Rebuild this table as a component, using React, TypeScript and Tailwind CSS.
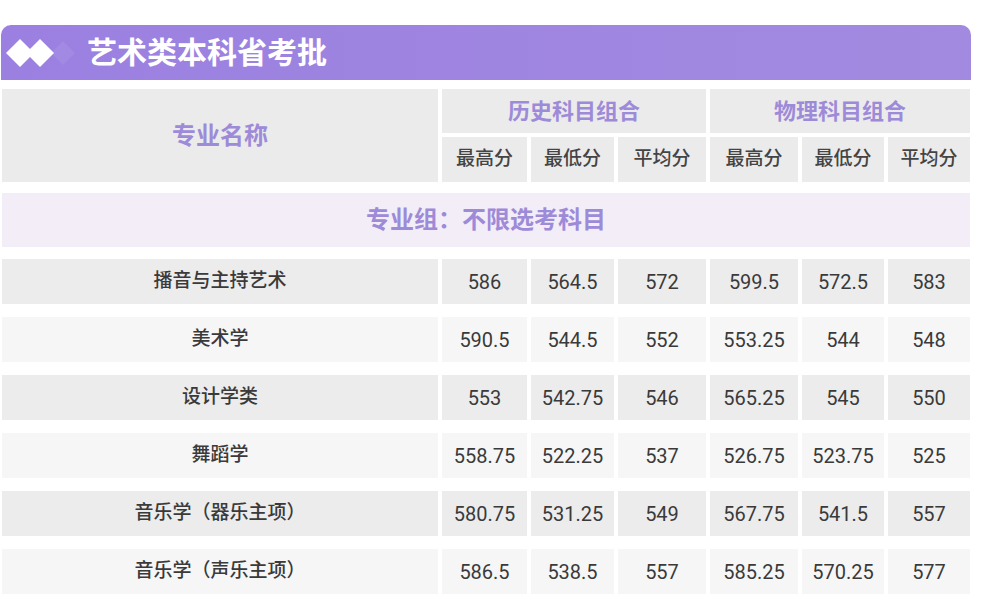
import React from "react"

const rows = [
  { name: "播音与主持艺术", v: ["586", "564.5", "572", "599.5", "572.5", "583"] },
  { name: "美术学", v: ["590.5", "544.5", "552", "553.25", "544", "548"] },
  { name: "设计学类", v: ["553", "542.75", "546", "565.25", "545", "550"] },
  { name: "舞蹈学", v: ["558.75", "522.25", "537", "526.75", "523.75", "525"] },
  { name: "音乐学（器乐主项）", v: ["580.75", "531.25", "549", "567.75", "541.5", "557"] },
  { name: "音乐学（声乐主项）", v: ["586.5", "538.5", "557", "585.25", "570.25", "577"] },
]

const subHeads = ["最高分", "最低分", "平均分", "最高分", "最低分", "平均分"]

const cols = "grid grid-cols-[436px_85px_83px_88px_88px_82px_82px] gap-x-[4px]"

function Diamonds() {
  return (
    <svg width="84" height="34" viewBox="0 0 84 34" className="shrink-0">
      <path d="M62 5 L74 17 L62 29 L50 17 Z" fill="#ffffff" opacity="0.07" />
      <path d="M19 3 L33 17 L19 31 L5 17 Z" fill="#ffffff" />
      <path d="M39 3 L53 17 L39 31 L25 17 Z" fill="#ffffff" />
    </svg>
  )
}

export default function App() {
  return (
    <div
      className="w-[982px] h-[602px] bg-white pt-[25px] pl-[1px] overflow-hidden"
      style={{ fontFamily: "Roboto, 'Noto Sans CJK SC', sans-serif" }}
    >
      <div className="w-[970px] h-[55px] rounded-t-[10px] bg-gradient-to-r from-[#9b80e1] to-[#a28ae0] flex items-center">
        <Diamonds />
        <span className="ml-[2px] text-[30px] font-bold text-white">艺术类本科省考批</span>
      </div>

      <div className="ml-[1px] w-[968px]">
        <div className={`${cols} grid-rows-[44px_45px] gap-y-[4px] mt-[9px]`}>
          <div className="row-span-2 bg-[#ebebeb] flex items-center justify-center text-[24px] font-bold text-[#9d8ad8]">
            专业名称
          </div>
          <div className="col-span-3 bg-[#ebebeb] flex items-center justify-center text-[22px] font-bold text-[#9d8ad8]">
            历史科目组合
          </div>
          <div className="col-span-3 bg-[#ebebeb] flex items-center justify-center text-[22px] font-bold text-[#9d8ad8]">
            物理科目组合
          </div>
          {subHeads.map((h, i) => (
            <div key={i} className="bg-[#ebebeb] flex items-center justify-center text-[19px] font-medium text-[#444444]">
              {h}
            </div>
          ))}
        </div>

        <div className="mt-[11px] h-[54px] bg-[#f2edf6] flex items-center justify-center text-[24px] font-bold text-[#9d8ad8]">
          专业组：不限选考科目
        </div>

        {rows.map((r, i) => {
          const bg = i % 2 === 0 ? "bg-[#ececec]" : "bg-[#f6f6f6]"
          return (
            <div key={r.name} className={`${cols} h-[45px] ${i === 0 ? "mt-[12px]" : "mt-[13px]"}`}>
              <div className={`${bg} flex items-center justify-center text-[19px] font-medium text-[#3a3a3a]`}>{r.name}</div>
              {r.v.map((v, j) => (
                <div key={j} className={`${bg} flex items-center justify-center text-[20px] font-normal text-[#3a3a3a]`}>
                  {v}
                </div>
              ))}
            </div>
          )
        })}
      </div>
    </div>
  )
}
